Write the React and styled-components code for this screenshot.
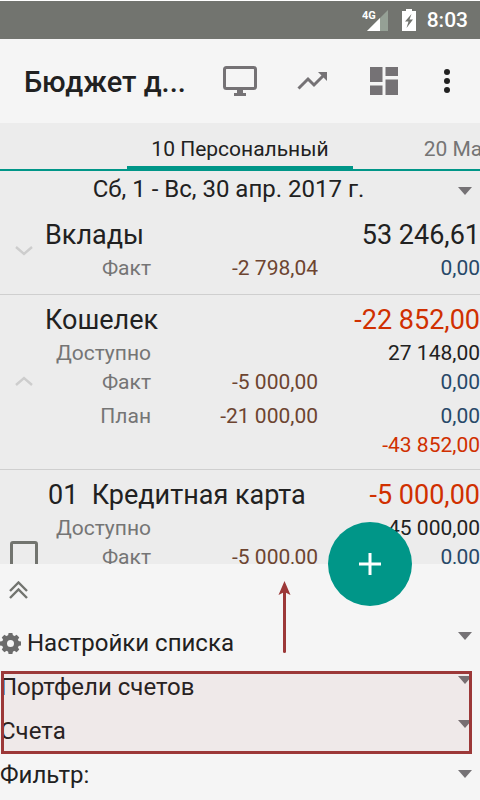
import React from "react";
import styled, { createGlobalStyle } from "styled-components";

const GlobalStyle = createGlobalStyle`
  * {
    box-sizing: border-box;
  }
  body {
    margin: 0;
    background: #ececec;
    color: #212121;
    font-family: Roboto, "Noto Sans", sans-serif;
  }
  button,
  select {
    appearance: none;
    background: none;
    border: 0;
    color: inherit;
    font: inherit;
    margin: 0;
    padding: 0;
  }
  svg {
    display: block;
    flex: none;
  }
`;

const Screen = styled.div`
  display: flex;
  flex-direction: column;
  height: 100vh;
  overflow: hidden;
`;

const StatusBar = styled.div`
  align-items: center;
  background: #72746f;
  border-top: 1px solid #fff;
  color: #fff;
  display: flex;
  flex: none;
  font-size: 21px;
  font-weight: 500;
  height: 39px;
  justify-content: flex-end;
  padding-right: 12px;
`;

const StatusIcon = styled.svg`
  margin-right: ${(props) => props.$gap};
`;

const Toolbar = styled.header`
  align-items: center;
  background: #f5f5f5;
  display: flex;
  flex: none;
  height: 84px;
  padding: 0 6px 0 24px;
`;

const Title = styled.h1`
  flex: 1;
  font-size: 29px;
  font-weight: 500;
  line-height: 36px;
  margin: 0;
  overflow: hidden;
  padding-top: 2px;
  white-space: nowrap;
`;

const IconButton = styled.button`
  align-items: center;
  color: ${(props) => props.$color || "#757275"};
  display: flex;
  height: 72px;
  justify-content: center;
  width: ${(props) => props.$width || "72px"};
`;

const Tabs = styled.nav`
  border-bottom: 2px solid #009688;
  display: grid;
  flex: none;
  font-size: 21px;
  grid-template-columns: 1fr auto 1fr;
  height: 48px;
`;

const Tab = styled.button`
  border-bottom: ${(props) => (props.$active ? "3px solid #009688" : "3px solid transparent")};
  color: ${(props) => (props.$active ? "#212121" : "#757575")};
  grid-column: ${(props) => (props.$active ? 2 : 3)};
  overflow: hidden;
  padding: ${(props) => (props.$active ? "8px 24px 0" : "8px 0 0 71px")};
  text-align: left;
  white-space: nowrap;
`;

const Period = styled.label`
  display: grid;
  flex: none;
  height: 39px;
`;

const PeriodSelect = styled.select`
  font-size: 24px;
  grid-area: 1 / 1;
  padding: 0 23px 3px 0;
  text-align-last: center;
`;

const PeriodCaret = styled.span`
  align-self: center;
  grid-area: 1 / 1;
  justify-self: end;
  padding-right: 8px;
  pointer-events: none;
`;

const List = styled.main`
  display: flex;
  flex: 1;
  flex-direction: column;
  min-height: 0;
  overflow: hidden;
`;

const Account = styled.section`
  border-bottom: 1px solid #cfcfcf;
  display: grid;
  flex: none;
  grid-template-columns: 44px 1fr;
  min-height: ${(props) => (props.$child ? "173px" : "85px")};
  padding: 7px 0 9px;
`;

const Marker = styled.div`
  align-items: center;
  display: flex;
  justify-content: center;
  padding-left: 3px;
`;

const Checkbox = styled.input`
  appearance: none;
  border: 3px solid #72746f;
  border-radius: 3px;
  height: 28px;
  margin: 0;
  width: 28px;
`;

const AccountHead = styled.div`
  display: flex;
  font-size: 27px;
  justify-content: space-between;
  line-height: 37px;
`;

const AccountName = styled.h2`
  font-size: 27px;
  font-weight: 400;
  margin: 0;
  padding-left: ${(props) => (props.$child ? "4px" : "1px")};
  white-space: pre;
`;

const Line = styled.div`
  display: grid;
  font-size: 21px;
  grid-template-columns: 107px 167px 1fr;
  line-height: 29px;
  padding-top: ${(props) => (props.$spaced ? "5px" : "0")};
  text-align: right;
`;

const Label = styled.span`
  color: #757575;
`;

const Amount = styled.span`
  color: ${(props) => props.$color || "#212121"};
  grid-column: ${(props) => props.$column || 3};
`;

const Panel = styled.footer`
  background: #f5f5f5;
  flex: none;
  font-size: 24px;
  padding-bottom: 3px;
  position: relative;
`;

const Collapse = styled.button`
  align-items: center;
  display: flex;
  height: 57px;
  padding: 0 0 5px 9px;
`;

const PanelRow = styled.button`
  align-items: center;
  display: flex;
  height: 44px;
  text-align: left;
  width: 100%;
`;

const RowText = styled.span`
  flex: 1;
  padding-left: ${(props) => (props.$icon ? "6px" : "0")};
`;

const RowCaret = styled.span`
  align-self: ${(props) => (props.$top ? "flex-start" : "center")};
  padding: ${(props) => (props.$top ? "11px 8px 0 0" : "0 8px 2px 0")};
`;

const FilterSelect = styled.select`
  flex: 1;
`;

const Group = styled.div`
  position: relative;
`;

const Highlight = styled.div`
  background: rgba(156, 54, 54, 0.06);
  border: 3px solid #9c3838;
  inset: 6px 8px -1px 1px;
  pointer-events: none;
  position: absolute;
`;

const Pointer = styled.svg`
  left: 278px;
  pointer-events: none;
  position: absolute;
  top: 17px;
`;

const Fab = styled.button`
  align-items: center;
  background: #009688;
  border-radius: 50%;
  color: #fff;
  display: flex;
  height: 84px;
  justify-content: center;
  position: absolute;
  right: 68px;
  top: -42px;
  width: 84px;
`;

const BROWN = "#6d4430";
const BLUE = "#274868";
const RED = "#d03000";

const accounts = [
  {
    name: "Вклады",
    total: "53 246,61",
    marker: "down",
    lines: [{ label: "Факт", out: "-2 798,04", sum: "0,00", color: BLUE }],
  },
  {
    name: "Кошелек",
    total: "-22 852,00",
    negative: true,
    marker: "up",
    lines: [
      { label: "Доступно", sum: "27 148,00" },
      { label: "Факт", out: "-5 000,00", sum: "0,00", color: BLUE },
      { label: "План", out: "-21 000,00", sum: "0,00", color: BLUE, spaced: true },
      { sum: "-43 852,00", color: RED },
    ],
  },
  {
    name: "01  Кредитная карта",
    total: "-5 000,00",
    negative: true,
    marker: "check",
    lines: [
      { label: "Доступно", sum: "45 000,00" },
      { label: "Факт", out: "-5 000,00", sum: "0,00", color: BLUE },
    ],
  },
];

const Caret = () => (
  <svg width="14" height="8" viewBox="0 0 14 8">
    <path d="M0 0h14L7 8z" fill="#757275" />
  </svg>
);

const Chevron = ({ up }) => (
  <svg width="18" height="10" viewBox="0 0 18 10" fill="none" stroke="#cdcdcd" strokeWidth="2.4">
    <path d={up ? "M1 9l8-7 8 7" : "M1 1l8 7 8-7"} />
  </svg>
);

const AccountRow = ({ account }) => {
  const child = account.marker === "check";
  return (
    <Account $child={child}>
      <Marker>
        {child ? (
          <Checkbox type="checkbox" aria-label={account.name} />
        ) : (
          <Chevron up={account.marker === "up"} />
        )}
      </Marker>
      <div>
        <AccountHead>
          <AccountName $child={child}>{account.name}</AccountName>
          <Amount $color={account.negative && RED}>{account.total}</Amount>
        </AccountHead>
        {account.lines.map((line) => (
          <Line key={line.label || "total"} $spaced={line.spaced}>
            {line.label && <Label>{line.label}</Label>}
            {line.out && (
              <Amount $column={2} $color={BROWN}>
                {line.out}
              </Amount>
            )}
            <Amount $color={line.color}>{line.sum}</Amount>
          </Line>
        ))}
      </div>
    </Account>
  );
};

const App = () => {
  return (
    <Screen>
      <GlobalStyle />
      <StatusBar>
        <StatusIcon $gap="13px" width="27" height="24" viewBox="0 0 27 24">
          <path d="M26 2v21H5z" fill="#95a095" />
          <path d="M18 10v13H5z" fill="#fff" />
          <text x="0" y="11" fontSize="11" fontWeight="700" fill="#fff" fontFamily="Roboto">
            4G
          </text>
        </StatusIcon>
        <StatusIcon $gap="11px" width="14" height="22" viewBox="0 0 14 22">
          <path d="M4 0h6v2h4v20H0V2h4z" fill="#fff" />
          <path d="M9.500 5L3 12.500h3.500L4.500 19 11 10.500H7.500z" fill="#72746f" />
        </StatusIcon>
        8:03
      </StatusBar>
      <Toolbar>
        <Title>Бюджет д...</Title>
        <IconButton aria-label="Экран">
          <svg width="34" height="30" viewBox="0 0 34 30">
            <rect x="1.500" y="1.500" width="31" height="21" rx="2" fill="none" stroke="currentColor" strokeWidth="3" />
            <path d="M14 23h6v4h3v3H11v-3h3z" fill="currentColor" />
          </svg>
        </IconButton>
        <IconButton aria-label="График">
          <svg width="30" height="18" viewBox="0 0 30 18">
            <path d="M1.500 16.500L11 7l6 6 9-9" fill="none" stroke="currentColor" strokeWidth="3" />
            <path d="M21 0h9v9z" fill="currentColor" />
          </svg>
        </IconButton>
        <IconButton aria-label="Панель">
          <svg width="28" height="28" viewBox="0 0 28 28" fill="currentColor">
            <path d="M0 0h12.500v15H0zM15.500 0H28v9H15.500zM0 18.500h12.500V28H0zM15.500 12.500H28V28H15.500z" />
          </svg>
        </IconButton>
        <IconButton aria-label="Ещё" $color="#212121" $width="54px">
          <svg width="6" height="24" viewBox="0 0 6 24" fill="currentColor">
            <circle cx="3" cy="3" r="3" />
            <circle cx="3" cy="12" r="3" />
            <circle cx="3" cy="21" r="3" />
          </svg>
        </IconButton>
      </Toolbar>
      <Tabs>
        <Tab $active>10 Персональный</Tab>
        <Tab>20 Ма</Tab>
      </Tabs>
      <Period>
        <PeriodSelect aria-label="Период">
          <option>Сб, 1 - Вс, 30 апр. 2017 г.</option>
        </PeriodSelect>
        <PeriodCaret>
          <Caret />
        </PeriodCaret>
      </Period>
      <List>
        {accounts.map((account) => (
          <AccountRow key={account.name} account={account} />
        ))}
      </List>
      <Panel>
        <Collapse aria-label="Свернуть">
          <svg width="19" height="18" viewBox="0 0 19 18" fill="none" stroke="#72746f" strokeWidth="2.400">
            <path d="M1 10l8.500-8.500L18 10M1 17l8.500-8.500L18 17" />
          </svg>
        </Collapse>
        <PanelRow>
          <svg width="21" height="21" viewBox="0 0 21 21">
            <circle cx="10.500" cy="10.500" r="6" fill="none" stroke="#6b6b6b" strokeWidth="5" />
            {[0, 45, 90, 135, 180, 225, 270, 315].map((angle) => (
              <path key={angle} d="M8 3l.6-3h3.800L13 3z" fill="#6b6b6b" transform={`rotate(${angle} 10.5 10.5)`} />
            ))}
          </svg>
          <RowText $icon>Настройки списка</RowText>
          <RowCaret $top>
            <Caret />
          </RowCaret>
        </PanelRow>
        <Group>
          <PanelRow>
            <RowText>Портфели счетов</RowText>
            <RowCaret $top>
              <Caret />
            </RowCaret>
          </PanelRow>
          <PanelRow>
            <RowText>Счета</RowText>
            <RowCaret $top>
              <Caret />
            </RowCaret>
          </PanelRow>
          <Highlight />
        </Group>
        <PanelRow as="div">
          <label htmlFor="filter">Фильтр:</label>
          <FilterSelect id="filter" />
          <RowCaret>
            <Caret />
          </RowCaret>
        </PanelRow>
        <Pointer width="13" height="72" viewBox="0 0 13 72">
          <path d="M6.500 10v60.500" stroke="#9c3838" strokeWidth="3" strokeLinecap="round" />
          <path d="M6.500 0l6 14-6-3-6 3z" fill="#9c3838" />
        </Pointer>
        <Fab aria-label="Добавить">
          <svg width="22" height="22" viewBox="0 0 22 22" stroke="currentColor" strokeWidth="3">
            <path d="M0 11h22M11 0v22" />
          </svg>
        </Fab>
      </Panel>
    </Screen>
  );
};

export default App;
